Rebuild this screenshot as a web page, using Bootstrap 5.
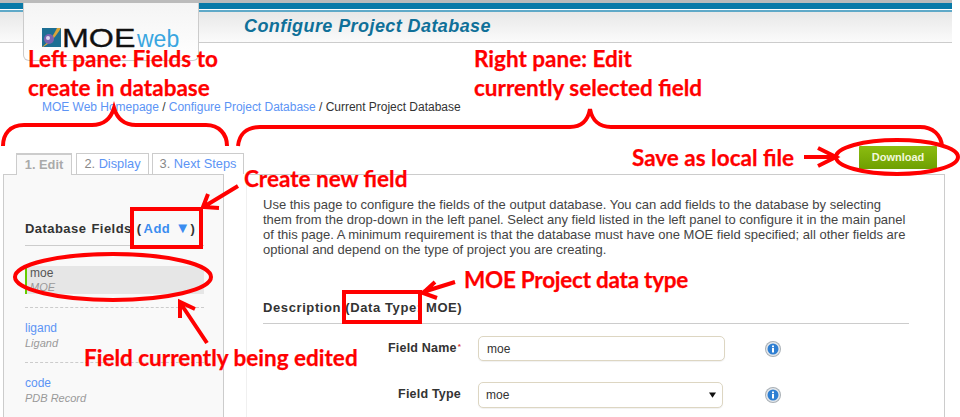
<!doctype html>
<html lang="en"><head><meta charset="utf-8"><title>Configure Project Database</title>
<link href="https://cdn.jsdelivr.net/npm/bootstrap@5.3.0/dist/css/bootstrap.min.css" rel="stylesheet">
<style>
html,body{height:417px;overflow:hidden;background:#fff}
body{font-family:"Liberation Sans",Arial,sans-serif;font-size:12px;color:#333;position:relative;width:960px}
.topbar{width:952px;height:43px;border-top:3px solid #bbb;position:relative;background:linear-gradient(#e2e2e2,#fbfbfb);border-bottom:1px solid #ccc;box-shadow:inset 0 6px 0 #0a7aa8,inset 0 7px 0 #fff,inset 0 9px 0 #5fa9c8}
.logobox{position:absolute;left:23px;top:0;width:176px;height:58px;background:linear-gradient(#f4f4f4,#fff);border:1px solid #ccc;border-top:0;border-radius:0 0 6px 6px;z-index:1}
.logomark{position:absolute;left:18px;top:25px}
.logotext{position:absolute;left:38px;top:20px;font-size:26px;line-height:30px;color:#111;white-space:nowrap}
.logomoe{display:inline-block;transform:scaleX(1.24);transform-origin:left;-webkit-text-stroke:.3px #111}
.logoweb{position:absolute;left:75px;top:1px;font-size:23px;color:#39a6e0}
.pagetitle{position:absolute;left:244px;top:11px;font-size:18px;line-height:24px;font-weight:700;font-style:italic;color:#0f7099;letter-spacing:.42px;margin:0}
.crumbs{margin-top:57px;margin-left:42px;height:17px;line-height:15px;white-space:nowrap;letter-spacing:-.02px}
.crumbs a,.plink{color:#5c94f5;text-decoration:none}
.panes{margin-top:36px;height:264px;position:relative}
.leftpane{width:224px;margin-left:3px;flex:none}
.tabrow{margin-left:13px;height:21px;gap:3px;position:relative;z-index:1}
.tabbtn{flex:none;height:21px;border:1px solid #ccc;border-bottom:0;background:#fff;line-height:20px;font-size:12.8px;color:#888;white-space:nowrap;text-align:center;width:73px}
.tabbtn.wide{width:92px}
.tabbtn.activetab{color:#aaa;font-weight:700;background:#f9f9f9;width:56px;height:22px;margin-right:1px;border-width:2px 1px 0}
.tabbtn a{color:#5c94f5;text-decoration:none}
.sidebox{height:243px;border:1px solid #ccc;border-bottom:0;background:#f9f9f9;padding:45px 19px 0 21px;width:221px}
.sidehead{font-size:13px;font-weight:700;letter-spacing:.45px;word-spacing:1px;color:#333;line-height:18px;padding-bottom:7px;border-bottom:1px solid #ccc;white-space:nowrap}
.sidehead span{color:#3b8df0;margin-left:2px}
.sidehead .addarrow{font-size:15px;line-height:15px;margin-left:0}
.fielditem{height:55px;border-bottom:1px dashed #ccc;padding-top:13px;line-height:15px;font-size:12px}
.fielditem.firstfield{height:62px;padding-top:20px}
.fielditem div{font-size:11px;font-style:italic;color:#999;line-height:15px}
.fielditem .fieldcur{background:#e6e6e6;border-left:2px solid #66cc00;height:28px;padding-left:3px;font-size:12px;font-style:normal;color:#555;line-height:14px}
.fielditem .fieldcur div{font-size:11px;font-style:italic;color:#999;line-height:14px}
.rightpane{margin-left:19px;width:699px;flex:none;margin-top:-7px;position:relative}
.dlrow{height:28px;padding-right:8px}
.dlbtn{width:78px;height:23px;border:0;border-radius:1px;background:linear-gradient(#8cbc10,#6ea002);color:#f2f8dc;font-weight:700;font-size:11px;padding:0;line-height:23px}
.mainbox{border:1px solid #ccc;border-left-color:#f0f0f0;border-bottom:0;height:243px;padding:22px 17px 0 16px;background:#fff}
.intro{font-size:13px;line-height:15px;color:#444;margin:0 0 42px;white-space:nowrap}
.sect{font-size:13px;font-weight:700;letter-spacing:.6px;color:#333;line-height:18px;padding-bottom:6px;border-bottom:1px solid #ccc;width:646px;margin-bottom:12px}
.frow{height:25px;margin-bottom:21px;width:646px}
.flabel{width:215px;text-align:right;font-weight:700;font-size:12.5px;letter-spacing:.2px;padding-right:17px;flex:none;white-space:nowrap}
.flabel sup{color:#d33;font-size:8px;top:-.4em;margin-left:1px}
.finput.form-control,.finput.form-select{width:247px;height:25px;min-height:25px;flex:none;border:1px solid #ddd6c2;border-radius:5px;padding:0 8px;font-size:12px;color:#333;box-shadow:0 1px 1px rgba(0,0,0,.06);background-color:#fff}
.finput.form-select{width:245px;height:26px;padding-left:7px;background-image:url("data:image/svg+xml,%3Csvg xmlns='http://www.w3.org/2000/svg' viewBox='0 0 8 6'%3E%3Cpath d='M0 0h8L4 6z' fill='%23111'/%3E%3C/svg%3E");background-position:right 6px center;background-size:7px 6px}
.infoicon{margin-left:40px;flex:none}
.finput.form-select + .infoicon{margin-left:42px}
.overlaylayer{position:absolute;left:0;top:0;z-index:5;pointer-events:none}
.notelabel{position:absolute;z-index:6;color:#f00;font-family:Lato,"Liberation Sans",sans-serif;font-weight:700;font-size:22.5px;line-height:29px;white-space:nowrap;margin:0;-webkit-text-stroke:.25px #f00}
.notemoe{letter-spacing:-.25px}
</style></head>
<body>
<header class="topbar">
  <div class="logobox">
    <svg class="logomark" width="19" height="19" viewBox="0 0 19 19"><rect width="19" height="19" fill="#1d6f94"/><path d="M15 0h4C14 8 9 15 1 19H0C7 14 11 8 15 0z" fill="#d9a43a"/><circle cx="7" cy="11" r="5" fill="#7a62b0"/><circle cx="6" cy="10" r="2" fill="#e0d8f0"/></svg>
    <div class="logotext"><span class="logomoe">MOE</span><span class="logoweb">web</span></div>
  </div>
  <h1 class="pagetitle">Configure Project Database</h1>
</header>
<nav class="crumbs"><a href="#">MOE Web Homepage</a> / <a href="#">Configure Project Database</a> / Current Project Database</nav>
<div class="panes d-flex">
  <aside class="leftpane">
    <div class="tabrow d-flex">
      <div class="tabbtn activetab">1. Edit</div>
      <div class="tabbtn">2. <a href="#">Display</a></div>
      <div class="tabbtn wide">3. <a href="#">Next Steps</a></div>
    </div>
    <div class="sidebox">
      <div class="sidehead">Database Fields (<span>Add&nbsp;<span class="addarrow">▼</span></span>)</div>
      <div class="fielditem firstfield"><div class="fieldcur">moe<div>MOE</div></div></div>
      <div class="fielditem"><a class="plink" href="#">ligand</a><div>Ligand</div></div>
      <div class="fielditem"><a class="plink" href="#">code</a><div>PDB Record</div></div>
    </div>
  </aside>
  <main class="rightpane">
    <div class="dlrow d-flex justify-content-end"><button class="dlbtn" type="button">Download</button></div>
    <div class="mainbox">
      <p class="intro">Use this page to configure the fields of the output database. You can add fields to the database by selecting<br>them from the drop-down in the left panel. Select any field listed in the left panel to configure it in the main panel<br>of this page. A minimum requirement is that the database must have one MOE field specified; all other fields are<br>optional and depend on the type of project you are creating.</p>
      <div class="sect">Description (Data Type: MOE)</div>
      <div class="frow d-flex align-items-center"><label class="flabel">Field Name<sup>*</sup></label><input class="form-control finput" value="moe"><svg class="infoicon" width="16" height="16" viewBox="0 0 16 16"><circle cx="8" cy="8" r="8" fill="#a9b0b6"/><circle cx="8" cy="8" r="7" fill="#e4e8ec"/><circle cx="8" cy="8" r="5.500" fill="#2f7fd2"/><rect x="7" y="7" width="2" height="4.500" fill="#fff"/><rect x="7" y="4.500" width="2" height="1.700" fill="#fff"/></svg></div>
      <div class="frow d-flex align-items-center"><label class="flabel">Field Type</label><select class="form-select finput"><option>moe</option></select><svg class="infoicon" width="16" height="16" viewBox="0 0 16 16"><circle cx="8" cy="8" r="8" fill="#a9b0b6"/><circle cx="8" cy="8" r="7" fill="#e4e8ec"/><circle cx="8" cy="8" r="5.500" fill="#2f7fd2"/><rect x="7" y="7" width="2" height="4.500" fill="#fff"/><rect x="7" y="4.500" width="2" height="1.700" fill="#fff"/></svg></div>
    </div>
  </main>
</div>
<svg class="overlaylayer" width="960" height="417" viewBox="0 0 960 417" fill="none" stroke="#f00" stroke-width="4">
  <path d="M3 146C3 134 10 125 24 125H92C104 125 111 118 114 108C117 118 124 125 136 125H206C219 125 227 134 227 146"/>
  <path d="M238 146C239 135 246 127 260 127H570C582 127 588 120 590 109C592 120 599 127 611 127H920C933 127 941 135 942 146"/>
  <ellipse cx="897" cy="157" rx="61" ry="17"/>
  <path d="M804 157H835M818 148L836 157L818 166"/>
  <path d="M238 186L205 206M208 194L203 207L219 208"/>
  <rect x="132" y="209" width="69" height="38"/>
  <ellipse cx="113" cy="277" rx="98" ry="23"/>
  <path d="M207 343L181 304M180 318L180 302L195 309"/>
  <rect x="344" y="292" width="76" height="30"/>
  <path d="M455 282L423 292M435 282L423 293L437 298"/>
</svg>
<p class="notelabel" style="left:28px;top:44px">Left pane: Fields to</p>
<p class="notelabel" style="left:28px;top:73px">create in database</p>
<p class="notelabel" style="left:474px;top:44px">Right pane: Edit</p>
<p class="notelabel" style="left:474px;top:73px">currently selected field</p>
<p class="notelabel" style="left:632px;top:143px">Save as local file</p>
<p class="notelabel" style="left:244px;top:164px">Create new field</p>
<p class="notelabel notemoe" style="left:464px;top:265px">MOE Project data type</p>
<p class="notelabel" style="left:84px;top:343px">Field currently being edited</p>
</body></html>
